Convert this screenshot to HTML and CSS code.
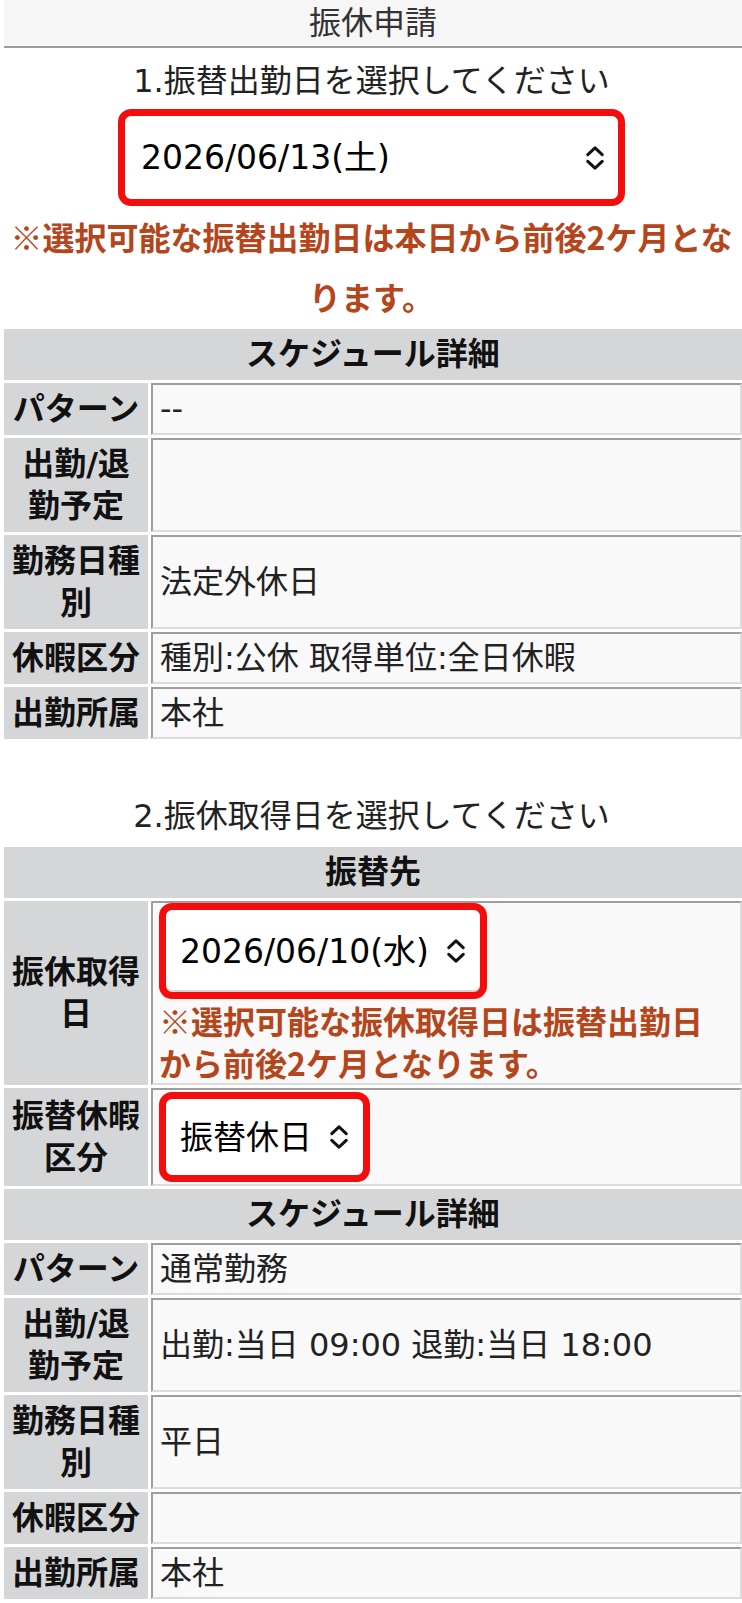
FILE: index.html
```html
<!DOCTYPE html>
<html lang="ja">
<head>
  <meta charset="UTF-8" />
  <meta name="viewport" content="width=device-width, initial-scale=1.0"/>
  <title>振休申請</title>
  <link rel="stylesheet" href="styles.css">
</head>

<body>
  <div class="page">
    <div class="topbar">振休申請</div>

    <p class="step">1.振替出勤日を選択してください</p>
    <div class="picker picker--wide">
      <span>2026/06/13(土)</span>
      <svg class="chev" viewBox="0 0 18 24" width="18" height="24"><path d="M1.8 8.6 9 1.8l7.2 6.8M1.8 15.4 9 22.2l7.2-6.8"/></svg>
    </div>
    <p class="notice">※選択可能な振替出勤日は本日から前後2ケ月となります。</p>

    <table class="sheet">
      <colgroup><col class="col-label"><col></colgroup>
      <tr><th class="head" colspan="2">スケジュール詳細</th></tr>
      <tr><td class="label">パターン</td><td class="value">--</td></tr>
      <tr><td class="label">出勤/退勤予定</td><td class="value"></td></tr>
      <tr><td class="label">勤務日種別</td><td class="value">法定外休日</td></tr>
      <tr><td class="label">休暇区分</td><td class="value">種別:公休 取得単位:全日休暇</td></tr>
      <tr><td class="label">出勤所属</td><td class="value">本社</td></tr>
    </table>

    <p class="step step--second">2.振休取得日を選択してください</p>

    <table class="sheet">
      <colgroup><col class="col-label"><col></colgroup>
      <tr><th class="head" colspan="2">振替先</th></tr>
      <tr>
        <td class="label">振休取得日</td>
        <td class="value value--date">
          <div class="picker picker--date">
            <span>2026/06/10(水)</span>
            <svg class="chev" viewBox="0 0 18 24" width="18" height="24"><path d="M1.8 8.6 9 1.8l7.2 6.8M1.8 15.4 9 22.2l7.2-6.8"/></svg>
          </div>
          <p class="cell-note">※選択可能な振休取得日は振替出勤日から前後2ケ月となります。</p>
        </td>
      </tr>
      <tr>
        <td class="label">振替休暇区分</td>
        <td class="value value--kind">
          <div class="picker picker--kind">
            <span>振替休日</span>
            <svg class="chev" viewBox="0 0 18 24" width="18" height="24"><path d="M1.8 8.6 9 1.8l7.2 6.8M1.8 15.4 9 22.2l7.2-6.8"/></svg>
          </div>
        </td>
      </tr>
      <tr><th class="head" colspan="2">スケジュール詳細</th></tr>
      <tr><td class="label">パターン</td><td class="value">通常勤務</td></tr>
      <tr><td class="label">出勤/退勤予定</td><td class="value">出勤:当日 09:00 退勤:当日 18:00</td></tr>
      <tr><td class="label">勤務日種別</td><td class="value">平日</td></tr>
      <tr><td class="label">休暇区分</td><td class="value"></td></tr>
      <tr><td class="label">出勤所属</td><td class="value">本社</td></tr>
    </table>
  </div>
</body>
</html>
```

FILE: styles.css
```css
body {
  margin: 0;
  font-family: "DejaVu Sans", "Noto Sans CJK JP", sans-serif;
  font-size: 32px;
  color: #222;
  background: #fff;
  overflow-x: hidden;
}

.page {
  padding-left: 1px;
  overflow: hidden;
}

.topbar {
  margin-left: 3px;
  height: 46px;
  line-height: 46px;
  background: #f6f6f6;
  border-bottom: 2px solid #9c9c9c;
  text-align: center;
  color: #333;
}

.step {
  margin: 11px 0 0;
  line-height: 44px;
  text-align: center;
  color: #222;
}

.step--second {
  margin: 52px 0 6px;
}

/* select boxes, outlined in red */
.picker {
  display: inline-flex;
  align-items: center;
  gap: 18px;
  box-sizing: border-box;
  border: 7px solid #f50d0d;
  border-radius: 13px;
  background: #fff;
  padding: 0 15px 0 14px;
  font-size: 33px;
  color: #000;
  line-height: 1;
}

.picker--wide {
  display: flex;
  justify-content: space-between;
  width: 507px;
  height: 97px;
  margin: 6px auto 0;
  padding: 0 14px 0 16px;
}

.picker--date {
  height: 96px;
  box-shadow: inset 0 -2px 0 #d4d4d4;
}

.picker--kind {
  height: 90px;
}

.chev {
  flex: none;
}

.chev path {
  fill: none;
  stroke: #111;
  stroke-width: 3;
  stroke-linecap: round;
  stroke-linejoin: round;
}

.notice {
  margin: 0;
  font-family: "Noto Sans CJK JP", sans-serif;
  font-size: 32px;
  font-weight: bold;
  line-height: 60px;
  text-align: center;
  color: #b5451b;
}

.sheet {
  width: calc(100% + 3px);
  border-spacing: 3px;
  table-layout: fixed;
}

.col-label {
  width: 144px;
}

.sheet th,
.sheet td {
  border: 2px solid transparent;
  padding: 3px 7px;
  line-height: 42px;
  vertical-align: middle;
}

.sheet .head {
  background: #d5d6d8;
  font-weight: bold;
  text-align: center;
  color: #111;
  padding: 2px 0 3px;
}

.sheet .label {
  background: #d5d6d8;
  font-weight: bold;
  text-align: center;
  color: #111;
  padding: 3px 3px;
}

.sheet .value {
  background: #f9f9f9;
  border-color: #9e9e9e #dcdcdc #dcdcdc #9e9e9e;
}

.sheet .value--date {
  padding: 0 6px;
}

.sheet .value--kind {
  padding: 2px 6px;
}

.cell-note {
  margin: 0;
  max-width: 560px;
  font-family: "Noto Sans CJK JP", sans-serif;
  font-weight: bold;
  color: #b5451b;
  line-height: 42px;
}
```
